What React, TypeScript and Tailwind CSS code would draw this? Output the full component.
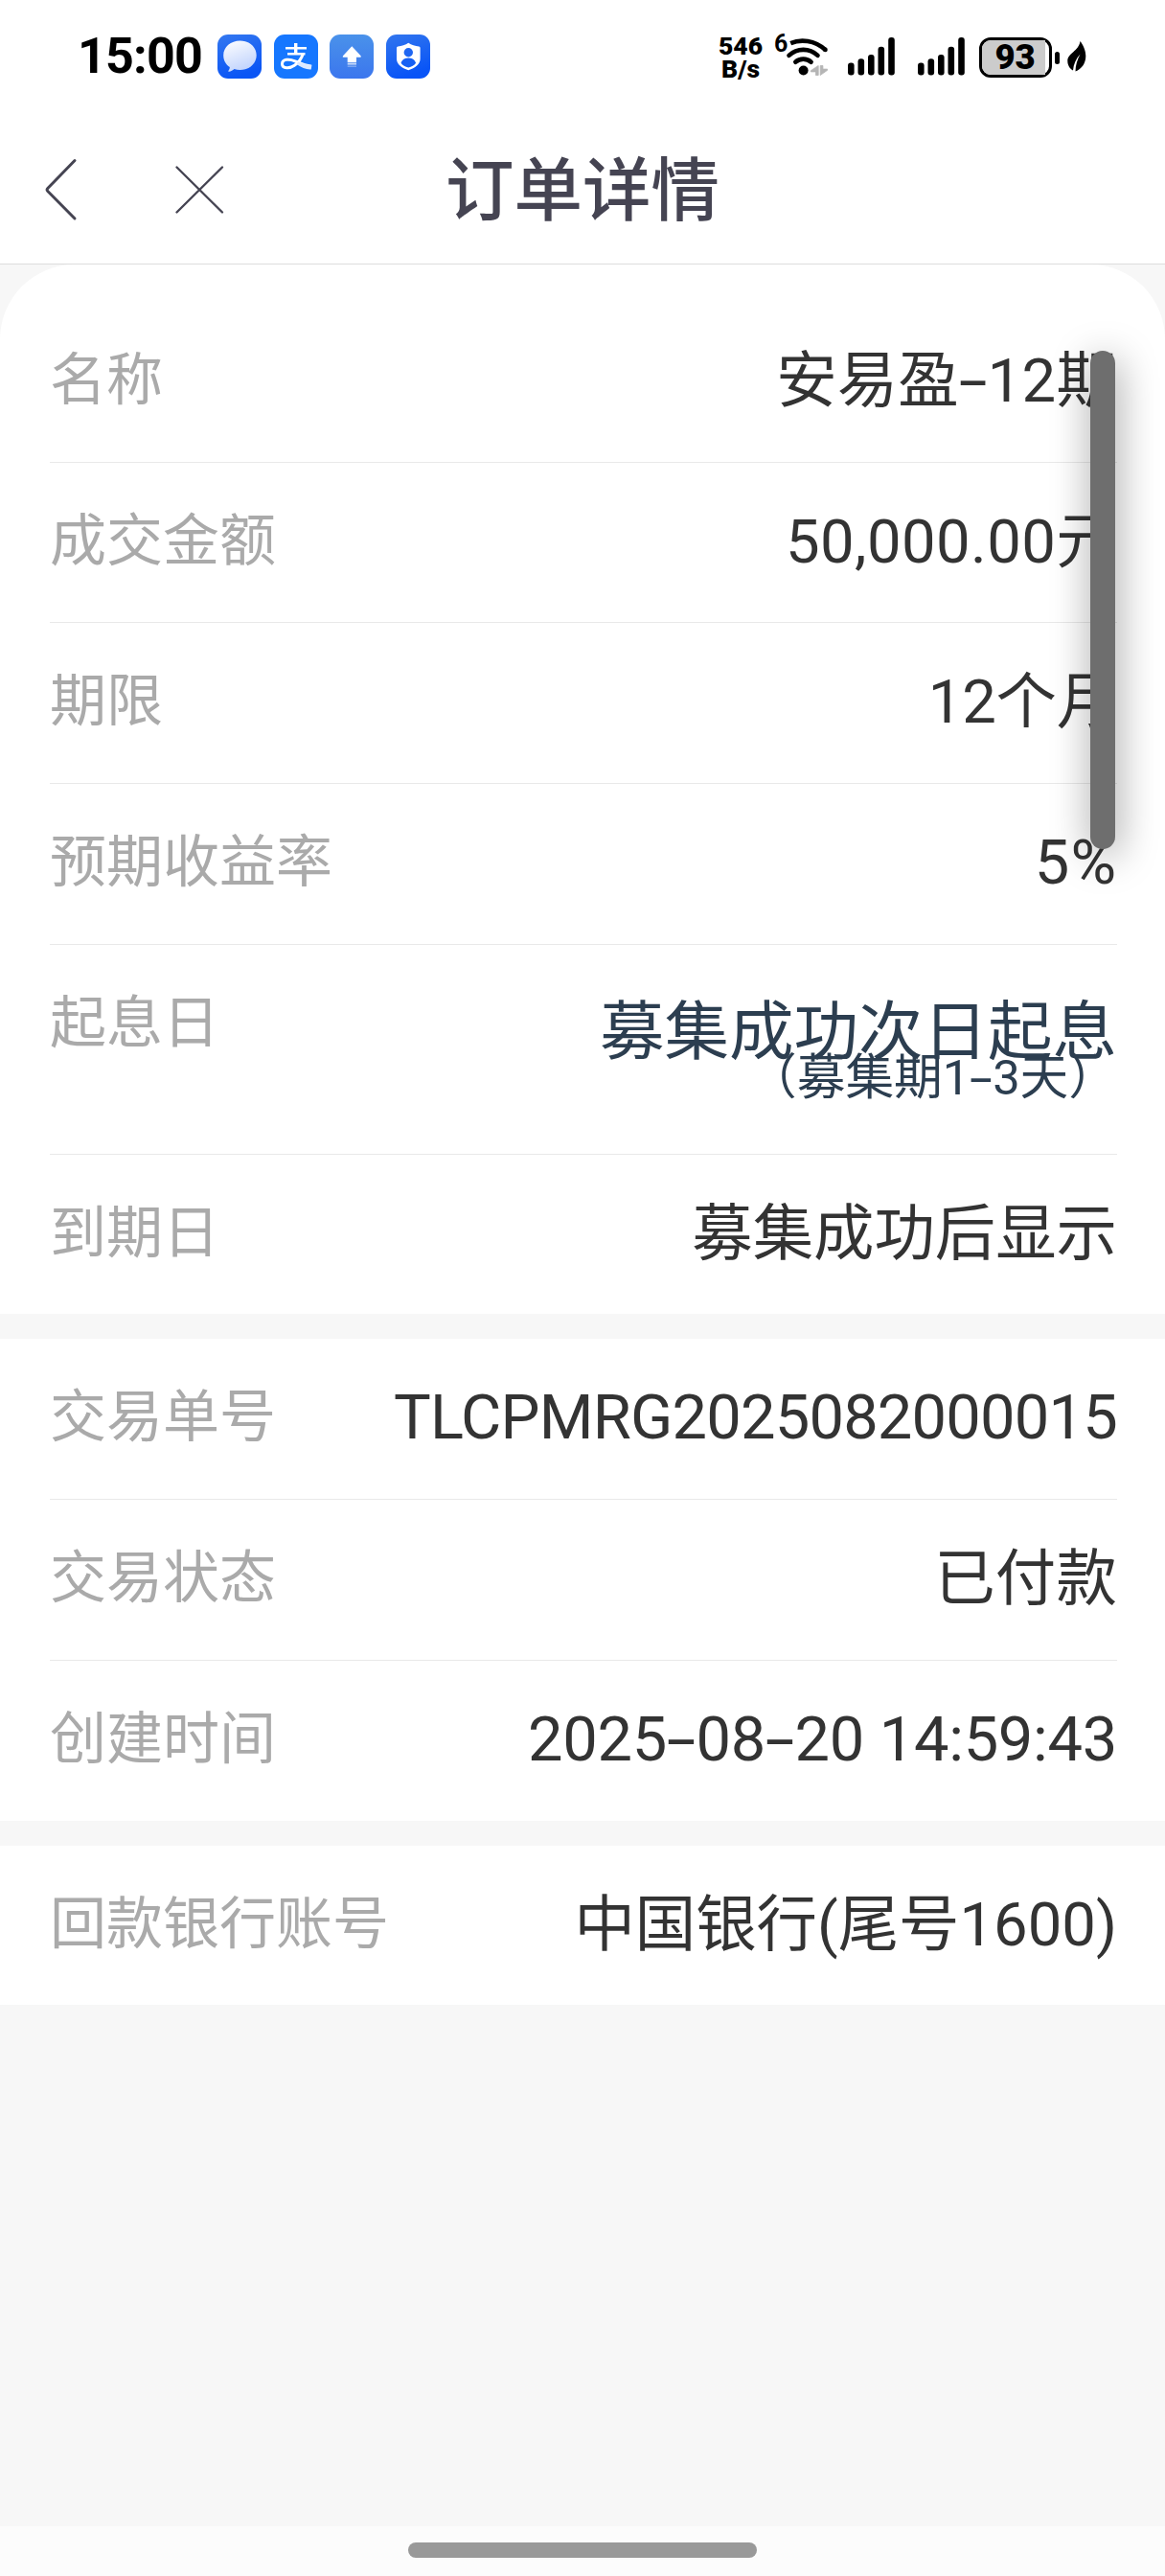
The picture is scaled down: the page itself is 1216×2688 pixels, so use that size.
import React from 'react';

interface Row {
    label: string;
    value: string;
    height: string;
    text?: string;
    note?: string;
}

const productRows: Row[] = [
    { label: '名称', value: '安易盈-12期', height: 'h-[168px]' },
    { label: '成交金额', value: '50,000.00元', height: 'h-[167px]', text: 'text-[63.400px] tracking-[0.4px]' },
    { label: '期限', value: '12个月', height: 'h-[168px]', text: 'text-[63.400px] tracking-[-0.2px]' },
    { label: '预期收益率', value: '5%', height: 'h-[168px]', text: 'text-[65px] tracking-[1px]' },
    { label: '起息日', value: '募集成功次日起息', note: '（募集期1-3天）', height: 'h-[219px]' },
    { label: '到期日', value: '募集成功后显示', height: 'h-[166px]', text: 'text-[63.400px]' },
];

const tradeRows: Row[] = [
    { label: '交易单号', value: 'TLCPMRG2025082000015', height: 'h-[168px]', text: 'text-[65px] tracking-[-0.8px]' },
    { label: '交易状态', value: '已付款', height: 'h-[168px]' },
    { label: '创建时间', value: '2025-08-20 14:59:43', height: 'h-[167px]', text: 'text-[65px] tracking-[-0.3px]' },
];

const bankRows: Row[] = [
    { label: '回款银行账号', value: '中国银行(尾号1600)', height: 'h-[166px]', text: 'text-[63.400px]' },
];

function MessageIcon() {
    return (
        <svg className="size-[46px]" viewBox="0 0 46 46" aria-hidden={true}>
            <defs>
                <linearGradient id="msg-bg" x1="0" y1="0" x2="0.3" y2="1">
                    <stop offset="0" stopColor="#3478f0" />
                    <stop offset="1" stopColor="#0a55f5" />
                </linearGradient>
                <linearGradient id="msg-bubble" x1="0" y1="0" x2="0.4" y2="1">
                    <stop offset="0" stopColor="#ffffff" />
                    <stop offset="1" stopColor="#c3d5fd" />
                </linearGradient>
            </defs>
            <rect width="46" height="46" rx="11" fill="url(#msg-bg)" />
            <path
                d="M23.5 6.5C33 6.5 40.700 13 40.700 21.700S33 37 23.500 37c-2 0-4.200-.4-6-.9-1.500 1.400-3.500 2.600-5.500 2.700-.8 0-.9-.6-.5-1.100.9-1.100 1.300-2.300 1.300-3.700C8.600 31.200 6.200 26.800 6.200 21.700 6.200 13 14 6.500 23.500 6.500Z"
                fill="url(#msg-bubble)"
            />
        </svg>
    );
}

function AlipayIcon() {
    return (
        <svg className="size-[46px]" viewBox="0 0 46 46" aria-hidden={true}>
            <rect width="46" height="46" rx="11" fill="#1677ff" />
            <g fill="none" stroke="#fff">
                <path d="M12 14.300h22M14 20.300h18.500" strokeWidth="2.400" />
                <path d="M22.700 9v11" strokeWidth="3.400" />
                <path d="M30.300 20c-1.500 5-5 9.500-9 12.300-4.500 3.300-12.800 3.600-12.800-1.600 0-5.300 7.500-5.400 13.500-2.900 5.500 2.300 10.500 4.600 16.800 5.400" strokeWidth="3" />
            </g>
            <path d="M25 28.500c5 2 9.500 3 14.500 3.200l-.8 4.800c-5 .4-10-2.300-15-5.200Z" fill="#dce9ff" />
        </svg>
    );
}

function UploadIcon() {
    return (
        <svg className="size-[46px]" viewBox="0 0 46 46" aria-hidden={true}>
            <defs>
                <linearGradient id="upload-bg" x1="0" y1="0" x2="0" y2="1">
                    <stop offset="0" stopColor="#4a92ea" />
                    <stop offset="1" stopColor="#3b76ee" />
                </linearGradient>
            </defs>
            <rect width="46" height="46" rx="11" fill="url(#upload-bg)" />
            <path d="M23.300 12.200 32.600 22.300q.9 1.500-.8 1.500H28v5.400H18.700v-5.400h-4q-1.700 0-.7-1.500Z" fill="#fff" />
            <path d="M18.700 30.800H28" stroke="#fff" strokeOpacity="0.75" strokeWidth="1.500" />
            <path d="M18.700 33.200H28" stroke="#fff" strokeOpacity="0.4" strokeWidth="1.200" />
        </svg>
    );
}

function ShieldIcon() {
    return (
        <svg className="size-[46px]" viewBox="0 0 46 46" aria-hidden={true}>
            <defs>
                <linearGradient id="shield-bg" x1="0" y1="0" x2="0.3" y2="1">
                    <stop offset="0" stopColor="#3276ee" />
                    <stop offset="1" stopColor="#0854f7" />
                </linearGradient>
            </defs>
            <rect width="46" height="46" rx="11" fill="url(#shield-bg)" />
            <path
                d="M23.300 8.700c3.300 2.200 7 3.400 11 3.800q1.300.2 1.300 1.500v11.500c0 5.500-5.200 9.300-12.300 11.700C16.200 34.800 11 31 11 25.500V14q0-1.300 1.300-1.500c4-.4 7.700-1.600 11-3.800Z"
                fill="#fff"
            />
            <circle cx="23.300" cy="18.800" r="4.700" fill="#1f66f2" />
            <path d="M15.500 29.700c1-3.500 4-5.200 7.800-5.200s6.800 1.700 7.800 5.200c-1.700 2.600-4.500 4-7.800 4.900-3.300-.9-6.100-2.300-7.800-4.900Z" fill="#1660f4" />
        </svg>
    );
}

function WifiIcon() {
    return (
        <svg className="h-[42px] w-[46px]" viewBox="0 0 46 42" aria-hidden={true}>
            <g fill="none" stroke="#000" strokeWidth="4.600">
                <path d="M5.200 7.200C16 2.500 30 4 41.500 14" />
                <path d="M41.400 13.900h.1" strokeLinecap="round" />
                <path d="M3.500 19.900C12 11.800 25 11.800 33.500 19.900" strokeLinecap="round" />
                <path d="M10.300 26.800c4.500-4.200 11.800-4.200 16.300 0" strokeLinecap="round" />
            </g>
            <circle cx="18.600" cy="35.500" r="5" fill="#000" />
            <path d="M34.200 30.500v10h-2.700v-3.600h-5.200v-1.200ZM36.200 40.500v-10h2.700v3.600h4.700v1.200Z" fill="#b5b5b5" stroke="#b5b5b5" strokeWidth="0.800" />
        </svg>
    );
}

function SignalIcon() {
    return (
        <svg className="h-[40px] w-[49px]" viewBox="0 0 49 40" aria-hidden={true}>
            <rect x="0" y="26.500" width="6.600" height="13" rx="3" />
            <rect x="10.500" y="22.300" width="6.600" height="17.200" rx="3" />
            <rect x="21" y="18" width="6.600" height="21.500" rx="3" />
            <rect x="31.500" y="9.700" width="6.600" height="29.800" rx="3" />
            <rect x="42.200" y="0" width="6.600" height="39.500" rx="3" />
        </svg>
    );
}

function StatusBar() {
    return (
        <div className="flex h-[116px] items-start pt-[36px] pl-[81px] text-black">
            <div className="w-[146px] text-[52px] leading-[45px] font-bold tracking-[-0.8px]">15:00</div>
            <div className="flex gap-[12.700px]">
                <MessageIcon />
                <AlipayIcon />
                <UploadIcon />
                <ShieldIcon />
            </div>
            <div className="ml-[300px] flex w-[48px] flex-col items-center text-[26.500px] leading-[24px] font-black">
                <span>546</span>
                <span>B/s</span>
            </div>
            <div className="ml-[11px] w-[14px] text-[25px] leading-[20px] font-bold">6</div>
            <div className="-ml-[2px] pt-[2px]">
                <WifiIcon />
            </div>
            <div className="ml-[19px] flex gap-[24px] pt-[3px]">
                <SignalIcon />
                <SignalIcon />
            </div>
            <div className="ml-[15px] flex pt-[3px]">
                <div className="h-[42px] w-[76px] rounded-[12px] border-3 border-black">
                    <div className="flex h-full w-[66px] items-center justify-center rounded-l-[9px] bg-[#cccccc] pl-[3px] text-[36.500px] leading-none font-black">
                        93
                    </div>
                </div>
                <div className="mt-[14.500px] ml-[3px] h-[13px] w-[5px] rounded-[2.500px] bg-black" />
            </div>
            <svg className="mt-[7px] ml-[8px] h-[32px] w-[20px]" viewBox="0 0 20 32" aria-hidden={true}>
                <path d="M13.500 0C16.500 4 19.300 9.500 19.300 15.500 19.300 23 15 29 8.500 31.500 8.500 25 10.500 19 13.500 13.500 9 18.500 6.500 24 6 30.500 2.500 28.500.3 25 .3 20.500.3 12.500 12 10.500 13.500 0Z" />
            </svg>
        </div>
    );
}

function NavBar() {
    return (
        <div className="relative flex h-[160px] items-center justify-center border-b border-[#dddddd]">
            <div className="absolute top-[48px] left-[46px] flex items-center">
                <svg className="h-[68px] w-[36px]" viewBox="0 0 36 68" fill="none" stroke="#454452" strokeWidth="3" strokeLinecap="round" aria-label="返回">
                    <path d="M32 3.500 3.800 32.500q-1.500 1.500 0 3L32 64" />
                </svg>
                <svg className="ml-[100px] h-[52px] w-[52px]" viewBox="0 0 52 52" fill="none" stroke="#454452" strokeWidth="2.400" strokeLinecap="round" aria-label="关闭">
                    <path d="M2.500 2.500 50 49.500M50 2.500 2.500 49.500" />
                </svg>
            </div>
            <h1 className="pt-[9px] text-[71.500px] leading-[80px] font-medium text-[#454452]">订单详情</h1>
        </div>
    );
}

// Hyphens get a wider cell than the font gives them
function Value({ text }: { text: string }) {
    return (
        <>
            {text.split(/(-)/).map((part, i) =>
                part === '-' ? (
                    <span key={i} className="inline-block w-[0.47em] text-center">
                        <span className="inline-block scale-x-170">-</span>
                    </span>
                ) : (
                    part
                ),
            )}
        </>
    );
}

function RowList({ rows }: { rows: Row[] }) {
    return (
        <ul className="pr-[50px] pl-[52px]">
            {rows.map((row, i) => (
                <li
                    key={row.label}
                    className={`flex justify-between ${row.height} ${i < rows.length - 1 ? 'border-b border-[#e9e9e9]' : ''}`}
                >
                    <span className="pt-[42px] text-[59px] leading-[80px] text-[#aaaaaa]">{row.label}</span>
                    {row.note ? (
                        <div className="flex flex-col items-end text-[#2c3e50]">
                            <span className="pt-[51px] text-[67.500px] leading-[80px]">{row.value}</span>
                            <span className="-mt-[32px] text-[50.700px] leading-[80px]">
                                <Value text={row.note} />
                            </span>
                        </div>
                    ) : (
                        <span className={`pt-[42px] leading-[80px] whitespace-nowrap text-[#333333] ${row.text ?? 'text-[63.400px] tracking-[0.2px]'}`}>
                            <Value text={row.value} />
                        </span>
                    )}
                </li>
            ))}
        </ul>
    );
}

export default function App() {
    return (
        <div className="relative flex h-[2688px] w-[1216px] flex-col overflow-hidden bg-[#f7f7f7] font-['Roboto','Noto_Sans_CJK_SC',sans-serif]">
            <header className="bg-white">
                <StatusBar />
                <NavBar />
            </header>
            <main className="flex flex-1 flex-col gap-[26px]">
                <section className="rounded-t-[78px] bg-white pt-[39px]">
                    <RowList rows={productRows} />
                </section>
                <section className="bg-white">
                    <RowList rows={tradeRows} />
                </section>
                <section className="bg-white">
                    <RowList rows={bankRows} />
                </section>
            </main>
            <footer className="flex h-[52px] justify-center bg-[#fcfcfc] pt-[17px]">
                <div className="h-[16px] w-[364px] rounded-full bg-[#999999]" />
            </footer>
            {/* scroll thumb floats over the list */}
            <div className="absolute top-[366px] left-[1138px] h-[520px] w-[26px] rounded-full bg-[#6e6e6e] shadow-[2px_8px_40px_rgba(0,0,0,0.4)]" />
        </div>
    );
}
